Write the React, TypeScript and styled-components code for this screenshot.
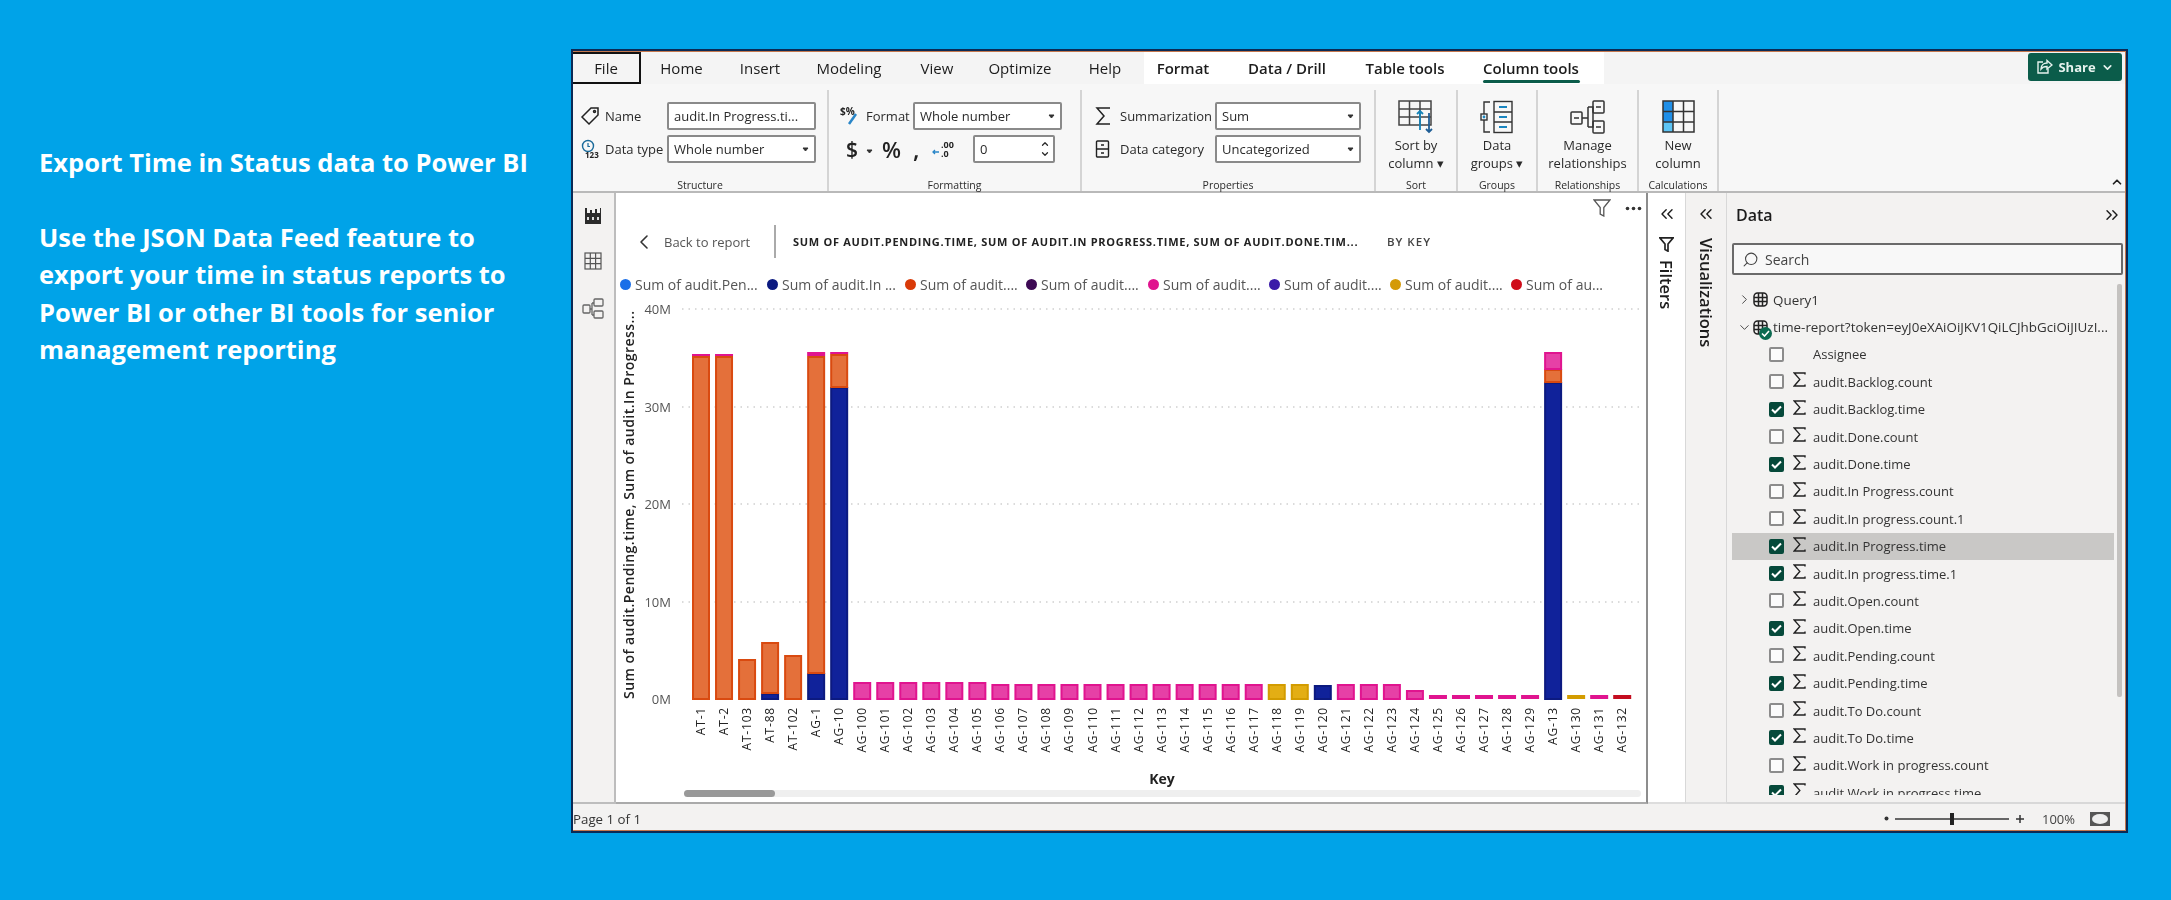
import React from "react";
import styled, { createGlobalStyle } from "styled-components";
import { ChevronsLeft, ChevronsRight, ChevronLeft, ChevronRight, ChevronDown, ChevronUp, Search } from "lucide-react";

const Global = createGlobalStyle`
  html, body { margin: 0; padding: 0; background: #00a3e8; }
  * { box-sizing: border-box; }
`;

const FONT = `"Open Sans", "Noto Sans", sans-serif`;

const Page = styled.div`
  width: 2171px; height: 900px; overflow: hidden; display: flex;
  background: #00a3e8; font-family: ${FONT};
`;
const Intro = styled.div`
  flex: none; width: 571px; padding: 144px 0 0 39px;
  color: #fff; font-size: 25.5px; font-weight: 700; line-height: 37.4px; white-space: nowrap;
`;
const IntroTitle = styled.div`margin-bottom: 37.4px;`;

const Window = styled.div`
  flex: none; width: 1557px; height: 784px; margin-top: 49px;
  border: 2px solid #0b2a55; padding: 1px 1px 1px 0; background: #c4774d;
  display: flex; flex-direction: column; filter: blur(0.35px);
`;
const TabBar = styled.div`
  flex: none; height: 32px; display: flex; background: #f4f4f4; position: relative;
`;
const Tab = styled.div<{ $w: number; $ctx?: boolean; $file?: boolean }>`
  width: ${p => p.$w}px; flex: none; display: flex; align-items: center; justify-content: center;
  font-size: 15px; color: #1c1c1c; position: relative;
  font-weight: ${p => (p.$ctx ? 600 : 500)};
  background: ${p => (p.$ctx ? "#fff" : "transparent")};
  ${p => p.$file && `border: 2px solid #111; border-left: none;`}
`;
const TabMark = styled.span`
  position: absolute; left: 25px; right: 24px; bottom: 1px; height: 3px; background: #0b5c4a; border-radius: 2px;
`;
const ShareButton = styled.div`
  margin: 1px 3px 0 auto; width: 94px; height: 28px; align-self: flex-start; background: #0b5c4a; border-radius: 3px;
  display: flex; align-items: center; justify-content: center; gap: 5px; color: #e6f2ee;
  font-size: 13px; font-weight: 700;
`;

const Ribbon = styled.div`
  flex: none; height: 109px; display: flex; padding-top: 6px; background: #f7f7f7; border-bottom: 2px solid #b9b9b9;
  position: relative; align-items: stretch;
`;
const Group = styled.div<{ $w: number }>`
  flex: none; width: ${p => p.$w}px; border-right: 2px solid #d4d4d4; display: flex; flex-direction: column;
`;
const GroupBody = styled.div`flex: 1; display: flex; flex-direction: column; gap: 5px; padding-top: 12px;`;
const GroupLabel = styled.div`
  height: 12px; line-height: 12px; text-align: center; font-size: 10.5px; color: #2b2b2b;
`;
const FieldRow = styled.div<{ $cols: string; $pad: number }>`
  height: 28px; display: grid; align-items: center; grid-template-columns: ${p => p.$cols}; padding-left: ${p => p.$pad}px;
  font-size: 13px; color: #2a2a2a; white-space: nowrap;
`;
const Field = styled.div`
  height: 100%; border: 2px solid #8a8a8a; border-radius: 2px; background: #fff; display: flex; align-items: center;
  justify-content: space-between; padding: 0 5px 0 5px; font-size: 13px; color: #2a2a2a; overflow: hidden;
`;
const Glyph = styled.span<{ $size: number }>`
  font-size: ${p => p.$size}px; font-weight: 600; line-height: 1; color: #222;
`;
const CaretSlot = styled.span`padding-left: 9px;`;
const Spin = styled.span`display: flex; flex-direction: column; margin-right: -2px;`;

const BigGroupBody = styled.div`flex: 1; display: flex; flex-direction: column; align-items: center; padding-top: 10px;`;
const BigText = styled.div`
  margin-top: 2px; text-align: center; font-size: 13px; line-height: 18px; color: #2a2a2a; white-space: nowrap;
`;
const Collapse = styled.div`position: absolute; right: 1px; bottom: 2px; display: flex;`;

const Main = styled.div`flex: none; height: 611px; display: flex; overflow: hidden;`;
const Rail = styled.div`
  flex: none; width: 43px; background: #f3f2f1; border-right: 2px solid #bdbdbd; border-bottom: 2px solid #bdbdbd;
  display: flex; flex-direction: column; align-items: center; padding: 15px 2px 0 0; gap: 28px;
`;
const Canvas = styled.div`
  flex: none; width: 1032px; background: #fff; border-right: 2px solid #8d8d8d; border-bottom: 2px solid #aaa;
  display: flex; flex-direction: column;
`;
const Actions = styled.div`
  height: 32px; display: flex; justify-content: flex-end; align-items: center; gap: 14px; padding: 0 4px 2px 0;
`;
const DrillHeader = styled.div`
  height: 33px; display: flex; align-items: center; padding-left: 16px;
`;
const BackText = styled.span`margin-left: 8px; font-size: 13px; color: #555; width: 110px;`;
const Divider = styled.span`width: 2px; height: 33px; background: #aaa; margin-right: 17px;`;
const DrillTitle = styled.span`font-size: 11px; font-weight: 700; letter-spacing: 0.72px; color: #222; width: 594px; white-space: nowrap;`;
const ByKey = styled.span`font-size: 11.5px; font-weight: 600; letter-spacing: 1px; color: #444;`;
const Legend = styled.div`
  height: 22px; margin-top: 15px; display: flex; align-items: center; padding-left: 4px;
`;
const LegendItem = styled.div<{ $w: number }>`
  flex: none; width: ${p => p.$w}px; display: flex; align-items: center; gap: 4px;
  font-size: 14px; color: #555; white-space: nowrap;
`;
const Dot = styled.span<{ $c: string }>`
  width: 11px; height: 11px; border-radius: 50%; background: ${p => p.$c}; flex: none;
`;
const ChartSvg = styled.svg`display: block; flex: none;`;
const HScroll = styled.div`
  height: 7px; margin: 1px 5px 0 68px; background: #efefef; border-radius: 4px;
`;
const HThumb = styled.div`width: 91px; height: 100%; background: #999; border-radius: 4px;`;

const SidePane = styled.div<{ $w: number; $bg: string }>`
  flex: none; width: ${p => p.$w}px; background: ${p => p.$bg}; border-right: 1px solid #d8d8d8; border-bottom: 2px solid #ddd;
  display: flex; flex-direction: column; align-items: center; padding-top: 11px; color: #1d1d1d;
`;
const FilterGlyph = styled.span`display: flex; margin-top: 13px;`;
const VerticalLabel = styled.div<{ $top: number }>`
  writing-mode: vertical-rl; margin-top: ${p => p.$top}px; font-size: 16.5px; font-weight: 600; color: #1c1c1c;
`;
const DataPane = styled.div`
  flex: none; width: 398px; background: #f3f2f1; border-bottom: 2px solid #d8d8d8;
  padding-left: 5px; display: flex; flex-direction: column;
`;
const DataHead = styled.div`
  height: 44px; display: flex; align-items: center; justify-content: space-between; padding: 0 3px 0 4px;
  font-size: 16px; font-weight: 600; color: #1b1b1b;
`;
const SearchBox = styled.div`
  height: 32px; margin: 6px 2px 0 0; border: 2px solid #6a6a6a; border-radius: 2px; background: #f8f8f8;
  display: flex; align-items: center; gap: 6px; padding-left: 8px; font-size: 14px; color: #444;
`;
const FlipIcon = styled.span`display: flex; transform: scaleX(-1);`;
const ListWrap = styled.div`flex: none; height: 511px; margin-top: 9px; display: flex; overflow: hidden;`;
const List = styled.div`flex: none; width: 382px; padding-top: 2px; overflow: hidden;`;
const ListBar = styled.div`flex: none; width: 5px; height: 413px; margin-left: 3px; background: #c4c2c0; border-radius: 2px;`;
const TreeRow = styled.div`
  height: 27.4px; display: grid; grid-template-columns: 16px 20px 1fr; padding-left: 5px; align-items: center;
  font-size: 13.4px; color: #333; white-space: nowrap;
`;
const TreeIcon = styled.span`position: relative; display: flex;`;
const Badge = styled.span`
  position: absolute; left: 6px; top: 7px; width: 13px; height: 13px; border-radius: 50%; background: #0b6a50;
  display: flex; align-items: center; justify-content: center;
`;
const FieldItem = styled.div<{ $on?: boolean }>`
  height: 27.4px; display: grid; grid-template-columns: 24px 20px 1fr; padding-left: 37px; align-items: center;
  font-size: 13px; color: #333; white-space: nowrap; background: ${p => (p.$on ? "#c9c8c6" : "transparent")};
`;
const Box = styled.span<{ $on?: boolean }>`
  width: 15px; height: 15px; border-radius: 2px; display: flex; align-items: center; justify-content: center;
  background: ${p => (p.$on ? "#06493a" : "#fbfbfb")}; border: 2px solid ${p => (p.$on ? "#06493a" : "#8c8c8c")};
`;
const Status = styled.div`
  flex: 1; background: #f3f2f1; display: flex; align-items: center; font-size: 13.3px; color: #333; padding: 3px 15px 0 0;
`;
const StatusRight = styled.div`margin-left: auto; display: flex; align-items: center; color: #444;`;
const SliderLine = styled.div`
  width: 114px; height: 2px; background: #666; margin: 0 6px; position: relative;
`;
const SliderThumb = styled.span`position: absolute; left: 55px; top: -5px; width: 4px; height: 12px; background: #222;`;
const Percent = styled.span`margin: 0 15px 0 17px; font-size: 13px;`;

const Sigma = ({ c = "#222" }: { c?: string }) => (
  <svg width="13" height="15" viewBox="0 0 13 15" fill="none" stroke={c} strokeWidth="1.4"><path d="M12 2.5V1H1.2l5.6 6.4L1.2 14H12v-1.5" /></svg>
);
const Caret = () => (
  <svg width="7" height="5" viewBox="0 0 7 5"><path d="M1 1l2.5 3L6 1z" fill="#333" stroke="#333" /></svg>
);
const Check = () => (
  <svg width="11" height="9" viewBox="0 0 11 9" fill="none" stroke="#fff" strokeWidth="2"><path d="M1 4.5l3 3 6-6" /></svg>
);
const Funnel = ({ s = 18, c = "#444", w = 1.3 }: { s?: number; c?: string; w?: number }) => (
  <svg width={s} height={s} viewBox="0 0 18 18" fill="none" stroke={c} strokeWidth={w}><path d="M1 1h16l-6.2 7.5V17l-3.6-2V8.500z" /></svg>
);
const TableGlobe = () => (
  <svg width="15" height="15" viewBox="0 0 15 15" fill="none" stroke="#222" strokeWidth="1.500"><rect x="1" y="1" width="13" height="13" rx="3.500" /><path d="M1 5.500h13M1 9.500h13M5.500 1v13M9.500 1v13" /></svg>
);
const MoreDots = () => (
  <svg width="17" height="5" viewBox="0 0 17 5" fill="#333"><circle cx="2.500" cy="2.500" r="1.800" /><circle cx="8.500" cy="2.500" r="1.800" /><circle cx="14.500" cy="2.500" r="1.800" /></svg>
);

const TabsData: { t: string; w: number; ctx?: boolean; file?: boolean; mark?: boolean }[] = [
  { t: "File", w: 68, file: true }, { t: "Home", w: 81 }, { t: "Insert", w: 76 }, { t: "Modeling", w: 102 },
  { t: "View", w: 74 }, { t: "Optimize", w: 92 }, { t: "Help", w: 78 }, { t: "Format", w: 78, ctx: true },
  { t: "Data / Drill", w: 130, ctx: true }, { t: "Table tools", w: 106, ctx: true }, { t: "Column tools", w: 146, ctx: true, mark: true },
];

const legend = [
  { c: "#1a6fe8", t: "Sum of audit.Pen...", w: 147 }, { c: "#0b1a80", t: "Sum of audit.In ...", w: 138 },
  { c: "#d93a08", t: "Sum of audit....", w: 121 }, { c: "#3d0a54", t: "Sum of audit....", w: 122 },
  { c: "#e0148f", t: "Sum of audit....", w: 121 }, { c: "#3a1aa8", t: "Sum of audit....", w: 121 },
  { c: "#d49a06", t: "Sum of audit....", w: 121 }, { c: "#cf0d1a", t: "Sum of au...", w: 110 },
];

type Seg = [string, number];
const P: [string, string] = ["#e640a6", "#e0148f"];
const O: [string, string] = ["#e4703a", "#d94a10"];
const B: [string, string] = ["#10229a", "#0c1a80"];
const G: [string, string] = ["#e3ae14", "#d39c00"];
const R: [string, string] = ["#d3152a", "#c40d20"];
const palette: Record<string, [string, string]> = { P, O, B, G, R };
const bars: { k: string; s: Seg[] }[] = [
  { k: "AT-1", s: [["O", 343], ["P", 2]] },
  { k: "AT-2", s: [["O", 343], ["P", 2]] },
  { k: "AT-103", s: [["O", 40]] },
  { k: "AT-88", s: [["B", 6], ["O", 51]] },
  { k: "AT-102", s: [["O", 44]] },
  { k: "AG-1", s: [["B", 26], ["O", 317], ["P", 4]] },
  { k: "AG-10", s: [["B", 312], ["O", 33], ["P", 2]] },
  ...Array.from({ length: 30 }, (_, i) => {
    const n = 100 + i;
    let s: Seg[] = [["P", 15]];
    if (n <= 105) s = [["P", 17]];
    if (n === 118 || n === 119) s = [["G", 15]];
    if (n === 120) s = [["B", 14]];
    if (n === 124) s = [["P", 9]];
    if (n >= 125) s = [["P", 4]];
    return { k: `AG-${n}`, s };
  }),
  { k: "AG-13", s: [["B", 317], ["O", 13], ["P", 17]] },
  { k: "AG-130", s: [["G", 4]] },
  { k: "AG-131", s: [["P", 4]] },
  { k: "AG-132", s: [["R", 4]] },
];

const fields: [string, boolean, boolean?, boolean?][] = [
  ["Assignee", false, true],
  ["audit.Backlog.count", false], ["audit.Backlog.time", true], ["audit.Done.count", false], ["audit.Done.time", true],
  ["audit.In Progress.count", false], ["audit.In progress.count.1", false], ["audit.In Progress.time", true, false, true],
  ["audit.In progress.time.1", true], ["audit.Open.count", false], ["audit.Open.time", true], ["audit.Pending.count", false],
  ["audit.Pending.time", true], ["audit.To Do.count", false], ["audit.To Do.time", true], ["audit.Work in progress.count", false],
  ["audit.Work in progress.time", true],
];

const Chart = () => (
  <ChartSvg width={1030} height={494} viewBox="617 296 1030 494" fontFamily={FONT}>
    {[[310, "40M"], [408, "30M"], [505, "20M"], [603, "10M"]].map(([y, t]) => (
      <line key={t} x1={683} x2={1640} y1={y as number} y2={y as number} stroke="#cfcfcf" strokeWidth="1.500" strokeDasharray="1.500 5" />
    ))}
    {[[310, "40M"], [408, "30M"], [505, "20M"], [603, "10M"], [700, "0M"]].map(([y, t]) => (
      <text key={t} x={672} y={(y as number) + 5} textAnchor="end" fontSize="13" fill="#555">{t}</text>
    ))}
    <text transform="translate(635 700) rotate(-90)" fontSize="14" fontWeight="600" fill="#222" textLength={388} lengthAdjust="spacing">Sum of audit.Pending.time, Sum of audit.In Progress...</text>
    {bars.map((b, i) => {
      const x = 693 + 23.03 * i;
      let base = 700;
      return (
        <g key={b.k}>
          {b.s.map(([c, h], j) => {
            base -= h;
            const [fill, edge] = palette[c];
            return h <= 4
              ? <rect key={j} x={x} y={base} width={18} height={h} fill={edge} />
              : <rect key={j} x={x + 1} y={base + 1} width={16} height={h - 1} fill={fill} stroke={edge} strokeWidth="2" />;
          })}
          <text transform={`translate(${x + 13} 708) rotate(-90)`} textAnchor="end" fontSize="12" letterSpacing="0.8" fill="#222">{b.k}</text>
        </g>
      );
    })}
    <text x={1163} y={785} textAnchor="middle" fontSize="14" fontWeight="700" fill="#222">Key</text>
  </ChartSvg>
);

export default function App() {
  return (
    <Page>
      <Global />
      <Intro>
        <IntroTitle>Export Time in Status data to Power BI</IntroTitle>
        Use the JSON Data Feed feature to<br />
        export your time in status reports to<br />
        Power BI or other BI tools for senior<br />
        management reporting
      </Intro>
      <Window>
        <TabBar>
          {TabsData.map(t => (
            <Tab key={t.t} $w={t.w} $ctx={t.ctx} $file={t.file}>{t.t}{t.mark && <TabMark />}</Tab>
          ))}
          <ShareButton>
            <svg width="17" height="16" viewBox="0 0 17 16" fill="none" stroke="#e6f2ee" strokeWidth="1.400"><path d="M7 3H2v11h10v-4" /><path d="M5 10c0-4 3-6 6-6V1.500L16 6l-5 4V7.500c-3 0-5 1-6 2.500z" /></svg>
            Share
            <ChevronDown size={13} strokeWidth={3} />
          </ShareButton>
        </TabBar>
        <Ribbon>
          <Group $w={256}>
            <GroupBody>
              <FieldRow $cols="25px 62px 149px" $pad={7}>
                <svg width="20" height="20" viewBox="0 0 20 20" fill="none" stroke="#222" strokeWidth="1.500"><path d="M11 2h7v7l-9 9-7-7z" /><circle cx="14.500" cy="5.500" r="1" /></svg>
                <span>Name</span>
                <Field>audit.In Progress.ti...</Field>
              </FieldRow>
              <FieldRow $cols="25px 62px 149px" $pad={7}>
                <svg width="20" height="20" viewBox="0 0 20 20" fill="none"><circle cx="8" cy="7" r="5.500" stroke="#1a6a9a" strokeWidth="1.400" /><path d="M8 4v3.500h2" stroke="#1a6a9a" strokeWidth="1.200" /><text x="5" y="19" fontSize="8" fontWeight="700" fill="#222" fontFamily={FONT}>123</text></svg>
                <span>Data type</span>
                <Field>Whole number<Caret /></Field>
              </FieldRow>
            </GroupBody>
            <GroupLabel>Structure</GroupLabel>
          </Group>
          <Group $w={253}>
            <GroupBody>
              <FieldRow $cols="26px 47px 149px" $pad={11}>
                <svg width="22" height="20" viewBox="0 0 22 20" fill="none"><text x="0" y="9" fontSize="10" fontWeight="700" fill="#222" fontFamily={FONT}>$%</text><path d="M16 8l-7 10" stroke="#2a86c8" strokeWidth="2.500" /></svg>
                <span>Format</span>
                <Field>Whole number<Caret /></Field>
              </FieldRow>
              <FieldRow $cols="11px 25px 31px 19px 41px 82px" $pad={17}>
                <Glyph $size={21}>$</Glyph>
                <CaretSlot><Caret /></CaretSlot>
                <Glyph $size={22}>%</Glyph>
                <Glyph $size={24}>,</Glyph>
                <svg width="24" height="20" viewBox="0 0 24 20" fill="none"><path d="M1 13h6M3 11l-2 2 2 2" stroke="#2a86c8" strokeWidth="1.300" /><text x="9" y="9" fontSize="9" fontWeight="700" fill="#222" fontFamily={FONT}>.00</text><text x="9" y="18" fontSize="9" fontWeight="700" fill="#222" fontFamily={FONT}>.0</text></svg>
                <Field>0<Spin><ChevronUp size={10} strokeWidth={3} /><ChevronDown size={10} strokeWidth={3} /></Spin></Field>
              </FieldRow>
            </GroupBody>
            <GroupLabel>Formatting</GroupLabel>
          </Group>
          <Group $w={294}>
            <GroupBody>
              <FieldRow $cols="25px 95px 146px" $pad={13}>
                <svg width="17" height="20" viewBox="0 0 17 20" fill="none" stroke="#222" strokeWidth="1.500"><path d="M15 2H2l7 8-7 8h13" /></svg>
                <span>Summarization</span>
                <Field>Sum<Caret /></Field>
              </FieldRow>
              <FieldRow $cols="25px 95px 146px" $pad={13}>
                <svg width="15" height="20" viewBox="0 0 15 20" fill="none" stroke="#222" strokeWidth="1.400"><rect x="1.500" y="2" width="12" height="16" rx="1" /><path d="M1.500 10h12M6 6h3M6 14h3" /></svg>
                <span>Data category</span>
                <Field>Uncategorized<Caret /></Field>
              </FieldRow>
            </GroupBody>
            <GroupLabel>Properties</GroupLabel>
          </Group>
          <Group $w={82}>
            <BigGroupBody>
              <svg width="36" height="34" viewBox="0 0 36 34" fill="none"><rect x="1" y="1" width="32" height="24" stroke="#444" strokeWidth="1.500" /><path d="M1 9h32M1 17h32M11.500 1v24M22 1v24" stroke="#444" strokeWidth="1.500" /><path d="M22 30V11M19 14l3-3 3 3" stroke="#1583b8" strokeWidth="1.800" /><path d="M31 13v19M28 29l3 3 3-3" stroke="#1f5e96" strokeWidth="1.800" /></svg>
              <BigText>Sort by<br />column ▾</BigText>
            </BigGroupBody>
            <GroupLabel>Sort</GroupLabel>
          </Group>
          <Group $w={80}>
            <BigGroupBody>
              <svg width="34" height="34" viewBox="0 0 34 34" fill="none" stroke="#333" strokeWidth="1.400"><path d="M10 2H4v30h6" /><rect x="14" y="1.500" width="18" height="31" /><path d="M14 12h18M14 22h18" /><path d="M19 7h8M19 17h8M19 27h8" stroke="#1a86c0" strokeWidth="2" /><rect x="1" y="14" width="6" height="6" fill="#f7f7f7" /><circle cx="4" cy="17" r="1.400" fill="#1a86c0" stroke="none" /></svg>
              <BigText>Data<br />groups ▾</BigText>
            </BigGroupBody>
            <GroupLabel>Groups</GroupLabel>
          </Group>
          <Group $w={101}>
            <BigGroupBody>
              <svg width="36" height="34" viewBox="0 0 36 34" fill="none" stroke="#333" strokeWidth="1.500"><rect x="1" y="12" width="11" height="12" rx="1" /><rect x="23" y="1" width="11" height="12" rx="1" /><rect x="23" y="21" width="11" height="12" rx="1" /><path d="M12 18h6M18 7h5v20h-5M18 7v20" /><path d="M4 18h5M26 7h5M26 27h5" /></svg>
              <BigText>Manage<br />relationships</BigText>
            </BigGroupBody>
            <GroupLabel>Relationships</GroupLabel>
          </Group>
          <Group $w={80}>
            <BigGroupBody>
              <svg width="33" height="34" viewBox="0 0 33 34" fill="none"><rect x="1" y="1" width="10" height="31" fill="#1f8fe8" /><rect x="1" y="22" width="10" height="10" fill="#5cc4f5" /><rect x="1" y="1" width="31" height="31" stroke="#333" strokeWidth="1.500" /><path d="M11 1v31M21.500 1v31M1 11.500h31M1 22h31" stroke="#333" strokeWidth="1.500" /></svg>
              <BigText>New<br />column</BigText>
            </BigGroupBody>
            <GroupLabel>Calculations</GroupLabel>
          </Group>
          <Collapse><ChevronUp size={14} strokeWidth={3} color="#222" /></Collapse>
        </Ribbon>
        <Main>
          <Rail>
            <svg width="18" height="16" viewBox="0 0 18 16"><path d="M1 0h2v5h3V2h2v3h3V1h2v4h3V0h1v16H1z" fill="#2b2b2b" /><path d="M3 9h2v3H3zM8 9h2v3H8zM13 9h2v3h-2z" fill="#ddd" /></svg>
            <svg width="18" height="18" viewBox="0 0 18 18" fill="none" stroke="#555" strokeWidth="1.200"><rect x="1" y="1" width="16" height="16" /><path d="M1 6.300h16M1 11.600h16M6.300 1v16M11.600 1v16" /></svg>
            <svg width="22" height="21" viewBox="0 0 22 21" fill="none" stroke="#666" strokeWidth="1.300"><rect x="1" y="7" width="7" height="8" rx="1" /><rect x="12" y="1" width="9" height="7" rx="1" /><rect x="12" y="13" width="9" height="7" rx="1" /><path d="M8 11h2M10 5v12M10 5h2M10 17h2" /></svg>
          </Rail>
          <Canvas>
            <Actions>
              <Funnel s={18} c="#555" />
              <MoreDots />
            </Actions>
            <DrillHeader>
              <ChevronLeft size={24} strokeWidth={1.6} color="#333" />
              <BackText>Back to report</BackText>
              <Divider />
              <DrillTitle>SUM OF AUDIT.PENDING.TIME, SUM OF AUDIT.IN PROGRESS.TIME, SUM OF AUDIT.DONE.TIM...</DrillTitle>
              <ByKey>BY KEY</ByKey>
            </DrillHeader>
            <Legend>
              {legend.map((l, i) => (
                <LegendItem key={i} $w={l.w}><Dot $c={l.c} />{l.t}</LegendItem>
              ))}
            </Legend>
            <Chart />
            <HScroll><HThumb /></HScroll>
          </Canvas>
          <SidePane $w={38} $bg="#fff">
            <ChevronsLeft size={20} strokeWidth={1.7} />
            <FilterGlyph><Funnel s={15} c="#222" w={2} /></FilterGlyph>
            <VerticalLabel $top={8}>Filters</VerticalLabel>
          </SidePane>
          <SidePane $w={41} $bg="#f3f2f1">
            <ChevronsLeft size={20} strokeWidth={1.7} />
            <VerticalLabel $top={14}>Visualizations</VerticalLabel>
          </SidePane>
          <DataPane>
            <DataHead>
              Data
              <ChevronsRight size={20} strokeWidth={1.7} />
            </DataHead>
            <SearchBox>
              <FlipIcon><Search size={17} strokeWidth={1.5} /></FlipIcon>
              Search
            </SearchBox>
            <ListWrap>
              <List>
                <TreeRow>
                  <ChevronRight size={15} strokeWidth={1.4} />
                  <TreeIcon><TableGlobe /></TreeIcon>
                  <span>Query1</span>
                </TreeRow>
                <TreeRow>
                  <ChevronDown size={15} strokeWidth={1.4} />
                  <TreeIcon>
                    <TableGlobe />
                    <Badge><svg width="9" height="7" viewBox="0 0 9 7" fill="none" stroke="#fff" strokeWidth="1.600"><path d="M1 3.500l2.500 2.500L8 1" /></svg></Badge>
                  </TreeIcon>
                  <span>time-report?token=eyJ0eXAiOiJKV1QiLCJhbGciOiJIUzI...</span>
                </TreeRow>
                {fields.map(([t, on, noSigma, hl]) => (
                  <FieldItem key={t} $on={hl}>
                    <Box $on={on}>{on && <Check />}</Box>
                    <span>{!noSigma && <Sigma />}</span>
                    <span>{t}</span>
                  </FieldItem>
                ))}
              </List>
              <ListBar />
            </ListWrap>
          </DataPane>
        </Main>
        <Status>
          Page 1 of 1
          <StatusRight>
            <svg width="5" height="5" viewBox="0 0 5 5"><circle cx="2.500" cy="2.500" r="2" fill="#333" /></svg>
            <SliderLine><SliderThumb /></SliderLine>
            <svg width="10" height="10" viewBox="0 0 10 10" stroke="#333" strokeWidth="1.500"><path d="M5 1v8M1 5h8" /></svg>
            <Percent>100%</Percent>
            <svg width="20" height="14" viewBox="0 0 20 14"><rect x="0" y="0" width="20" height="14" fill="#555" /><ellipse cx="10" cy="7" rx="8" ry="5" fill="#eee" /></svg>
          </StatusRight>
        </Status>
      </Window>
    </Page>
  );
}
